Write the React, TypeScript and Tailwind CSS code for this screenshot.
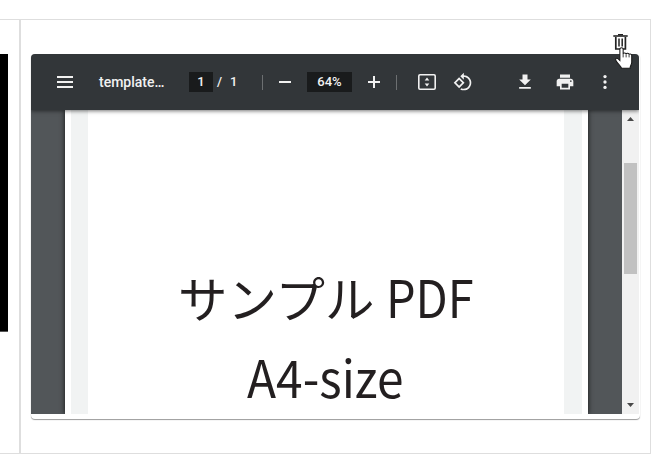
import type { ReactNode } from "react";

function Toolbar() {
  return (
    <header className="relative z-10 flex h-14 shrink-0 items-center bg-[#323639] pl-[26px] text-[#f1f1f1] shadow-[0_1px_4px_rgba(0,0,0,0.55)]">
      <svg className="h-3 w-4 shrink-0" viewBox="0 0 16 12" fill="currentColor">
        <path d="M0 0h16v2H0zM0 5h16v2H0zM0 10h16v2H0z" />
      </svg>
      <span className="ml-[26px] w-[90px] whitespace-nowrap text-[14px] font-medium">template…</span>
      <Field width="w-6">1</Field>
      <span className="ml-1 w-[13px] text-[13px] font-medium">/</span>
      <span className="w-8 text-[13px] font-medium">1</span>
      <Divider />
      <span className="ml-4 h-0.5 w-3 shrink-0 bg-current" />
      <span className="w-4 shrink-0" />
      <Field width="w-[45px]">64%</Field>
      <svg className="ml-4 h-3 w-3 shrink-0" viewBox="0 0 12 12" fill="currentColor">
        <path d="M5 0h2v5h5v2H7v5H5V7H0V5h5z" />
      </svg>
      <span className="w-4 shrink-0" />
      <Divider />
      <svg className="ml-[21px] h-4 w-[18px] shrink-0" viewBox="0 0 18 16" fill="none">
        <rect x=".8" y=".8" width="16.4" height="14.4" rx="1.2" stroke="currentColor" strokeWidth="1.6" />
        <path d="M6.7 6.5 9 3.6l2.3 2.9zM6.7 9.5 9 12.4l2.3-2.9z" fill="currentColor" />
      </svg>
      <svg className="ml-[17px] size-5 shrink-0" viewBox="0 0 24 24" fill="currentColor">
        <path d="M7.34 6.41L.86 12.9l6.49 6.48 6.49-6.48-6.5-6.49zM3.69 12.9l3.66-3.66L11 12.9l-3.66 3.66-3.65-3.66zm15.67-6.26C17.61 4.88 15.3 4 13 4V.76L8.76 5 13 9.24V6c1.79 0 3.58.68 4.95 2.05 2.73 2.73 2.73 7.17 0 9.9C16.58 19.32 14.79 20 13 20c-.97 0-1.94-.21-2.84-.61l-1.49 1.49C10.02 21.62 11.51 22 13 22c2.3 0 4.61-.88 6.36-2.64 3.52-3.51 3.52-9.21 0-12.72z" />
      </svg>
      <svg className="ml-[42px] size-5 shrink-0" viewBox="0 0 24 24" fill="currentColor">
        <path d="M19 9h-4V3H9v6H5l7 7 7-7zM5 18v2h14v-2H5z" />
      </svg>
      <svg className="ml-5 size-5 shrink-0" viewBox="0 0 24 24" fill="currentColor">
        <path d="M19 8H5c-1.66 0-3 1.34-3 3v6h4v4h12v-4h4v-6c0-1.66-1.34-3-3-3zm-3 11H8v-5h8v5zm3-7c-.55 0-1-.45-1-1s.45-1 1-1 1 .45 1 1-.45 1-1 1zm-1-9H6v4h12V3z" />
      </svg>
      <svg className="ml-5 size-5 shrink-0" viewBox="0 0 24 24" fill="currentColor">
        <circle cx="12" cy="5.5" r="2" />
        <circle cx="12" cy="12" r="2" />
        <circle cx="12" cy="18.5" r="2" />
      </svg>
    </header>
  );
}

function Field({ width, children }: { width: string; children: ReactNode }) {
  return (
    <span className={`flex h-5 shrink-0 items-center justify-center bg-[#191b1c] text-[13px] font-medium ${width}`}>
      {children}
    </span>
  );
}

function Divider() {
  return <span className="h-[15px] w-px shrink-0 bg-[#6c6f71]" />;
}

function Scrollbar() {
  return (
    <div className="relative flex w-[17px] flex-col items-center bg-[#f1f1f1] pr-px text-[#484848]">
      <svg className="mt-[7px] h-1 w-[7px]" viewBox="0 0 7 4" fill="currentColor">
        <path d="M0 4 3.5 0 7 4z" />
      </svg>
      <div className="mt-[42px] h-[111px] w-[13px] bg-[#c1c1c1]" />
      <svg className="mt-auto mb-[7px] h-1 w-[7px]" viewBox="0 0 7 4" fill="currentColor">
        <path d="M0 0 3.5 4 7 0z" />
      </svg>
    </div>
  );
}

function Viewer() {
  return (
    <section className="flex h-[365px] w-[609px] flex-col rounded bg-white shadow-[0_1px_1px_rgba(0,0,0,0.4)]">
      <div className="flex h-[360px] w-[608px] flex-col overflow-hidden rounded-t">
        <Toolbar />
        <div className="flex min-h-0 flex-1 bg-[#525659]">
          <main className="ml-[34px] flex w-[523px] bg-white px-1.5 shadow-[0_0_5px_rgba(0,0,0,0.8)]">
            <div className="w-[17px] bg-[#f1f3f3]" />
            <div className="flex flex-1 flex-col pt-[147px] text-[#231f20]">
              <h1 className="ml-[90px] flex h-[81px] items-center whitespace-pre font-['Noto_Sans_CJK_JP',sans-serif] text-[49px] leading-[76px]">
                <span className="-mt-0.5 origin-left scale-x-[1.01]">サンプル</span>
                <span className="-mt-1 ml-[13px] origin-left scale-x-[0.9] text-[52px]">PDF</span>
              </h1>
              <p className="ml-[159px] h-[76px] w-[170px] origin-left scale-x-[0.92] whitespace-nowrap font-['Noto_Sans_CJK_JP',sans-serif] text-[52px] leading-[76px]">A4-size</p>
            </div>
            <div className="w-[18px] bg-[#f1f3f3]" />
          </main>
          <div className="w-[34px] shrink-0" />
          <Scrollbar />
        </div>
      </div>
    </section>
  );
}

function DeleteButton() {
  return (
    <button className="relative ml-[592px] mt-[13px] flex h-[21px] w-5 items-start pt-px" aria-label="Delete">
      <svg className="h-4 w-[15px]" viewBox="0 0 15 16" fill="none" stroke="#222">
        <path d="M5 .7h5" strokeWidth="1.4" />
        <path d="M.3 2h14.4" strokeWidth="1.6" />
        <path d="M2.8 3v12h9.6V3" strokeWidth="1.7" />
        <path d="M6 4.6v8M9.2 4.6v8" strokeWidth="1.5" />
      </svg>
      <svg className="absolute left-0.5 top-[14px] z-20 h-[23px] w-[18px]" viewBox="0 0 17 23" preserveAspectRatio="none">
        <path d="M4.6 13.5V2.2C4.6.2 7.7.2 7.7 2.2v4.7c0-1.5 2.8-1.3 2.8.3 0-1.4 2.8-1.2 2.8.5 0-1.2 2.5-.9 2.5.8v6.7c0 2.5-1.6 3.5-1.6 6.1H6.1C5.7 18.8 2.4 16.8.8 13.2c-.8-2 1.3-2.5 2.3-1.2z" fill="white" stroke="#171717" strokeWidth="1" />
        <path d="M7.7 7v3.4M10.5 7.4V10.4M13.3 8v2.4" stroke="#333" strokeWidth=".9" />
      </svg>
    </button>
  );
}

export default function App() {
  return (
    <div className="h-[456px] w-[669px] overflow-hidden bg-white pt-[19px] font-[Roboto,sans-serif]">
      <div className="flex h-[435px] w-[651px] border-y border-r border-[#dedede]">
        <div className="w-[19px] shrink-0 pt-[34px]">
          <div className="h-[278px] w-2 border-b border-[#555] bg-black" />
        </div>
        <div className="w-[631px] border-l-2 border-[#dedede]">
          <DeleteButton />
          <div className="pl-2.5">
            <Viewer />
          </div>
        </div>
      </div>
    </div>
  );
}
